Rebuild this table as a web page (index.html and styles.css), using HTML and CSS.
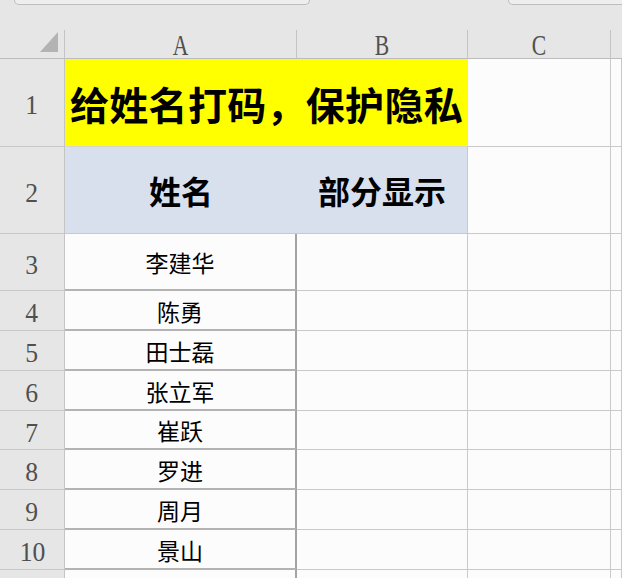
FILE: index.html
```html
<!DOCTYPE html>
<html lang="zh">
<head>
<meta charset="utf-8">
<title>给姓名打码</title>
<link rel="stylesheet" href="styles.css">
</head>
<body>
<div class="topbar">
  <div class="box box-name"></div>
  <div class="box box-formula"></div>
</div>
<div class="sheet">
  <div class="corner"><span class="tri"></span></div>
  <div class="ch"><span class="lbl">A</span></div>
  <div class="ch"><span class="lbl">B</span></div>
  <div class="ch"><span class="lbl">C</span></div>
  <div class="ch ch-end"></div>

  <div class="rh"><span class="num">1</span></div>
  <div class="title">给姓名打码，保护隐私</div>
  <div class="c"></div>
  <div class="c"></div>

  <div class="rh"><span class="num">2</span></div>
  <div class="hd hd-a">姓名</div>
  <div class="hd hd-b">部分显示</div>
  <div class="c"></div>
  <div class="c"></div>

  <div class="rh"><span class="num">3</span></div>
  <div class="a">李建华</div>
  <div class="c"></div>
  <div class="c"></div>
  <div class="c"></div>

  <div class="rh"><span class="num">4</span></div>
  <div class="a">陈勇</div>
  <div class="c"></div>
  <div class="c"></div>
  <div class="c"></div>

  <div class="rh"><span class="num">5</span></div>
  <div class="a">田士磊</div>
  <div class="c"></div>
  <div class="c"></div>
  <div class="c"></div>

  <div class="rh"><span class="num">6</span></div>
  <div class="a">张立军</div>
  <div class="c"></div>
  <div class="c"></div>
  <div class="c"></div>

  <div class="rh"><span class="num">7</span></div>
  <div class="a">崔跃</div>
  <div class="c"></div>
  <div class="c"></div>
  <div class="c"></div>

  <div class="rh"><span class="num">8</span></div>
  <div class="a">罗进</div>
  <div class="c"></div>
  <div class="c"></div>
  <div class="c"></div>

  <div class="rh"><span class="num">9</span></div>
  <div class="a">周月</div>
  <div class="c"></div>
  <div class="c"></div>
  <div class="c"></div>

  <div class="rh"><span class="num">10</span></div>
  <div class="a">景山</div>
  <div class="c"></div>
  <div class="c"></div>
  <div class="c"></div>

  <div class="rh"></div>
  <div class="a"></div>
  <div class="c"></div>
  <div class="c"></div>
  <div class="c"></div>
</div>
</body>
</html>
```

FILE: styles.css
```css
html, body {
  margin: 0;
  padding: 0;
}
body {
  width: 622px;
  height: 578px;
  overflow: hidden;
  background: #e6e6e6;
  font-family: "Noto Sans CJK SC", "Noto Sans", sans-serif;
}
.topbar {
  height: 30px;
  display: flex;
  align-items: flex-start;
}
.box {
  height: 4px;
  background: #eeeeee;
  border: 1px solid #bdbdbd;
  border-top: none;
  border-radius: 0 0 8px 8px;
}
.box-name {
  margin-left: 14px;
  width: 294px;
}
.box-formula {
  margin-left: 198px;
  flex: 1;
  margin-right: -20px;
}
.sheet {
  display: grid;
  grid-template-columns: 65px 232px 171px 143px 1fr;
  grid-template-rows: 29px 88px 87px 57px 40px 40px 40px 39px 40px 40px 40px 40px;
  height: 548px;
  overflow: hidden;
}
.sheet > div {
  box-sizing: border-box;
  display: flex;
  align-items: center;
  justify-content: center;
}
.corner {
  background: #e6e6e6;
  border-right: 1px solid #c4c4c4;
  border-bottom: 1px solid #bcbcbc;
  position: relative;
}
.tri {
  position: absolute;
  left: 40px;
  top: 2px;
  width: 0;
  height: 0;
  border-left: 18px solid transparent;
  border-bottom: 20px solid #b3b3b3;
}
.ch {
  background: #e6e6e6;
  border-right: 1px solid #c4c4c4;
  border-bottom: 1px solid #bcbcbc;
}
.ch-end {
  border-right: none;
}
.lbl {
  display: inline-block;
  font-family: "Liberation Serif", serif;
  font-size: 24px;
  color: #505050;
  line-height: 1;
  transform: scale(0.9, 1.26);
  margin-top: 2px;
}
.rh {
  background: #e6e6e6;
  border-right: 1px solid #c4c4c4;
  border-bottom: 1px solid #c8c8c8;
}
.num {
  display: inline-block;
  font-family: "Liberation Serif", serif;
  font-size: 27px;
  color: #505050;
  line-height: 1;
  transform: scale(0.95, 1.05);
  margin-top: 6px;
}
.c {
  background: #fdfcfd;
  border-right: 1px solid #c9c9c9;
  border-bottom: 1px solid #c9c9c9;
}
.title {
  grid-column: span 2;
  background: #ffff00;
  border-bottom: 1px solid #d8d8c8;
  font-size: 39px;
  font-weight: 700;
  color: #000;
  letter-spacing: 0.3px;
}
.hd {
  background: #d9e0ed;
  font-size: 32px;
  font-weight: 700;
  color: #000;
  border-bottom: 1px solid #c9c9c9;
}
.hd-b {
  border-right: 1px solid #c9c9c9;
}
.a {
  background: #fdfcfd;
  border-right: 2px solid #a3a3a3;
  border-bottom: 2px solid #b3b3b3;
  font-size: 23px;
  color: #000;
  padding-top: 1px;
}
```
